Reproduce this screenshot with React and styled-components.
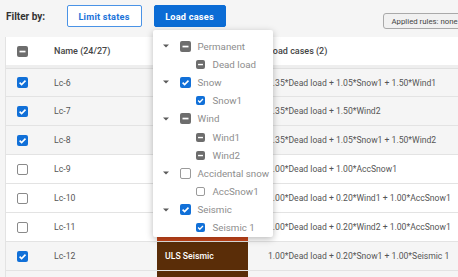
import React from "react";
import styled, { createGlobalStyle } from "styled-components";

const Global = createGlobalStyle`
  html, body { margin: 0; padding: 0; background: #f5f5f5; overflow: hidden; }
  body { font-family: Roboto, "Liberation Sans", sans-serif; }
  * { box-sizing: border-box; }
`;

const Page = styled.div`
  width: 458px;
  height: 277px;
  overflow: hidden;
  background: #f5f5f5;
`;

const TopBar = styled.div`
  display: flex;
  align-items: center;
  height: 37px;
  padding-left: 6px;
  width: 600px;
`;

const FilterLabel = styled.span`
  flex-shrink: 0;
  white-space: nowrap;
  font-size: 10px;
  font-weight: 700;
  color: #333;
  width: 60.5px;
  margin-top: -4px;
`;

const Button = styled.button`
  flex-shrink: 0;
  width: ${(p) => p.$w}px;
  height: 22px;
  padding: 0;
  border-radius: 2px;
  font-family: Roboto, "Liberation Sans", sans-serif;
  font-size: 9.2px;
  font-weight: 700;
  letter-spacing: 0.2px;
  white-space: nowrap;
  cursor: pointer;
  border: 1px solid ${(p) => (p.$primary ? "#0b6cd5" : "#4a93e6")};
  background: ${(p) => (p.$primary ? "#0b6cd5" : "#ffffff")};
  color: ${(p) => (p.$primary ? "#ffffff" : "#1a73d9")};
`;

const ButtonSlot = styled.div`
  position: relative;
  flex-shrink: 0;
  display: flex;
  margin-left: ${(p) => p.$gap || 0}px;
  margin-top: -5px;
`;

const AppliedRules = styled.div`
  flex-shrink: 0;
  margin-left: 157px;
  margin-top: 5px;
  height: 16px;
  padding: 0 8px;
  display: flex;
  align-items: center;
  white-space: nowrap;
  font-size: 7.8px;
  color: #444;
  background: #f1f1f1;
  border: 1px solid #a9a9a9;
  border-radius: 3px;
  width: 110px;
`;

const Menu = styled.div`
  position: absolute;
  left: -1px;
  top: 25px;
  width: 120px;
  padding: 7px 0 0;
  background: #ffffff;
  border-radius: 2px;
  box-shadow: 0 2px 7px rgba(0, 0, 0, 0.28);
  z-index: 10;
`;

const MenuItem = styled.div`
  display: flex;
  align-items: center;
  height: 18.2px;
  padding-left: ${(p) => (p.$child ? 43 : 10)}px;
  font-size: 9.75px;
  color: #8d8d8d;
  white-space: nowrap;
`;

const Caret = styled.span`
  width: 17px;
  display: flex;
  align-items: center;
  flex-shrink: 0;
`;

const MenuLabel = styled.span`
  margin-left: ${(p) => (p.$child ? 8 : 7)}px;
`;

const Box = styled.span`
  display: inline-flex;
  align-items: center;
  justify-content: center;
  flex-shrink: 0;
  width: ${(p) => p.$size}px;
  height: ${(p) => p.$size}px;
  border-radius: 2px;
  background: ${(p) =>
    p.$state === "checked" ? "#1170d8" : p.$state === "indeterminate" ? "#6d6d6d" : "#ffffff"};
  border: ${(p) => (p.$state === "unchecked" ? `1.5px solid ${p.$light ? "#9a9a9a" : "#8a8a8a"}` : "none")};
`;

function Check({ state, size = 11, light }) {
  return (
    <Box $state={state} $size={size} $light={light}>
      {state === "checked" && (
        <svg width={size} height={size} viewBox="0 0 11 11">
          <polyline points="2.6,5.6 4.6,7.6 8.5,3.6" fill="none" stroke="#fff" strokeWidth="1.6" />
        </svg>
      )}
      {state === "indeterminate" && (
        <svg width={size} height={size} viewBox="0 0 11 11">
          <rect x="2.5" y="4.7" width="6" height="1.7" fill="#fff" />
        </svg>
      )}
    </Box>
  );
}

const Table = styled.div`
  margin-left: 5px;
  width: 470px;
  background: #ffffff;
  border-left: 1px solid #e3e3e3;
`;

const Row = styled.div`
  display: grid;
  grid-template-columns: 48px 103px 91px 1fr;
  align-items: center;
  height: ${(p) => (p.$head ? 31 : 29)}px;
  background: ${(p) => (p.$selected ? "#f5f5f5" : "#ffffff")};
  border-bottom: ${(p) => (p.$head ? "3px solid #eeeeee" : "1px solid #e3e3e3")};
  border-top: ${(p) => (p.$first ? "1px solid #e0e0e0" : "none")};
`;

const CheckCell = styled.div`
  padding-left: 11px;
  display: flex;
  align-items: center;
`;

const HeadText = styled.div`
  font-size: 9px;
  font-weight: 500;
  color: #444;
  white-space: nowrap;
  padding-left: ${(p) => p.$pad || 0}px;
`;

const NameCell = styled.div`
  font-size: 8.7px;
  color: #555;
`;

const TypeCell = styled.div`
  align-self: stretch;
  display: flex;
  align-items: center;
  padding-left: 8px;
  background: ${(p) => p.$color};
  color: #fff;
  font-size: 8.7px;
  font-weight: 500;
  white-space: nowrap;
`;

const FormulaCell = styled.div`
  padding-left: 20px;
  font-size: 8.6px;
  color: #555;
  white-space: nowrap;
`;

const menu = [
  { label: "Permanent", state: "indeterminate", children: [{ label: "Dead load", state: "indeterminate" }] },
  { label: "Snow", state: "checked", children: [{ label: "Snow1", state: "checked" }] },
  {
    label: "Wind",
    state: "indeterminate",
    children: [
      { label: "Wind1", state: "indeterminate" },
      { label: "Wind2", state: "indeterminate" },
    ],
  },
  { label: "Accidental snow", state: "unchecked", children: [{ label: "AccSnow1", state: "unchecked" }] },
  { label: "Seismic", state: "checked", children: [{ label: "Seismic 1", state: "checked" }] },
];

const ULS = { label: "ULS", color: "#1d4f91" };
const ACC = { label: "ULS Accidental", color: "#c8461b" };
const SEIS = { label: "ULS Seismic", color: "#5a2d08" };

const rows = [
  { name: "Lc-6", checked: true, type: ULS, formula: "1.35*Dead load + 1.05*Snow1 + 1.50*Wind1" },
  { name: "Lc-7", checked: true, type: ULS, formula: "1.35*Dead load + 1.50*Wind2" },
  { name: "Lc-8", checked: true, type: ULS, formula: "1.35*Dead load + 1.05*Snow1 + 1.50*Wind2" },
  { name: "Lc-9", checked: false, type: ACC, formula: "1.00*Dead load + 1.00*AccSnow1" },
  { name: "Lc-10", checked: false, type: ACC, formula: "1.00*Dead load + 0.20*Wind1 + 1.00*AccSnow1" },
  { name: "Lc-11", checked: false, type: ACC, formula: "1.00*Dead load + 0.20*Wind2 + 1.00*AccSnow1" },
  { name: "Lc-12", checked: true, type: SEIS, formula: "1.00*Dead load + 0.20*Snow1 + 1.00*Seismic 1" },
  { name: "Lc-13", checked: true, type: SEIS, formula: "1.00*Dead load + 0.20*Snow1 - 1.00*Seismic 1" },
];

function CaretIcon() {
  return (
    <svg width="6" height="4" viewBox="0 0 6 4">
      <polygon points="0,0.5 6,0.5 3,3.5" fill="#5a5a5a" />
    </svg>
  );
}

export default function App() {
  return (
    <Page>
      <Global />
      <TopBar>
        <FilterLabel>Filter by:</FilterLabel>
        <ButtonSlot>
          <Button $w={75}>Limit states</Button>
        </ButtonSlot>
        <ButtonSlot $gap={12}>
          <Button $primary $w={72}>Load cases</Button>
          <Menu>
            {menu.map((g) => (
              <React.Fragment key={g.label}>
                <MenuItem>
                  <Caret>
                    <CaretIcon />
                  </Caret>
                  <Check state={g.state} size={11} light />
                  <MenuLabel>{g.label}</MenuLabel>
                </MenuItem>
                {g.children.map((c) => (
                  <MenuItem $child key={c.label}>
                    <Check state={c.state} size={9} light />
                    <MenuLabel $child>{c.label}</MenuLabel>
                  </MenuItem>
                ))}
              </React.Fragment>
            ))}
          </Menu>
        </ButtonSlot>
        <AppliedRules>Applied rules: none</AppliedRules>
      </TopBar>
      <Table>
        <Row $head>
          <CheckCell>
            <Check state="indeterminate" />
          </CheckCell>
          <HeadText>Name (24/27)</HeadText>
          <HeadText $pad={8}>Type</HeadText>
          <HeadText $pad={20}>Load cases (2)</HeadText>
        </Row>
        {rows.map((r, i) => (
          <Row key={r.name} $selected={r.checked} $first={i === 0}>
            <CheckCell>
              <Check state={r.checked ? "checked" : "unchecked"} />
            </CheckCell>
            <NameCell>{r.name}</NameCell>
            <TypeCell $color={r.type.color}>{r.type.label}</TypeCell>
            <FormulaCell>{r.formula}</FormulaCell>
          </Row>
        ))}
      </Table>
    </Page>
  );
}
